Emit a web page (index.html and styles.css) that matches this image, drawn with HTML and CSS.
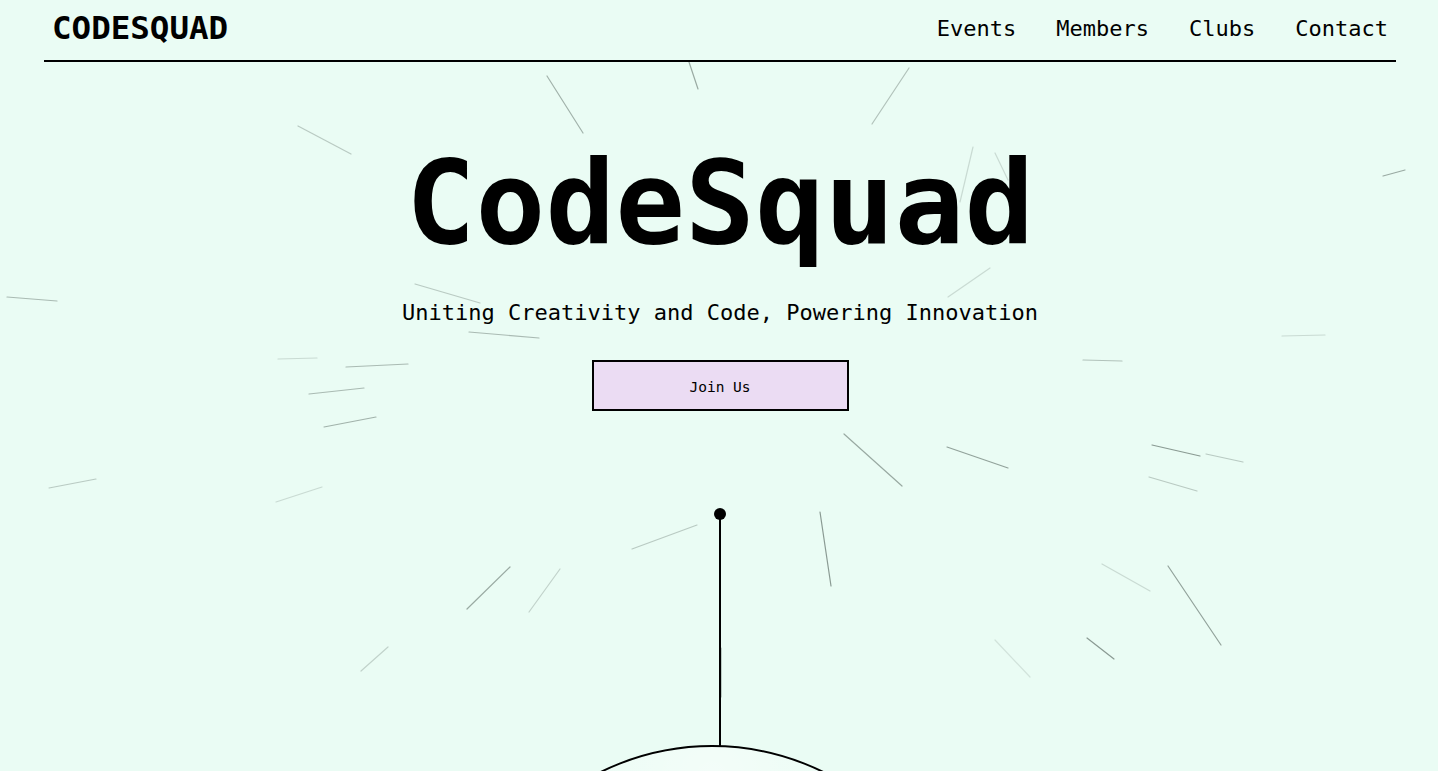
FILE: index.html
```html
<!DOCTYPE html>
<html lang="en">
<head>
<meta charset="utf-8">
<title>CodeSquad</title>
<link rel="stylesheet" href="styles.css">
</head>
<body>
<div class="viewport">
<div class="canvas">
<svg class="warp" viewBox="0 0 1423 771" aria-hidden="true">
  <g stroke="#4b5a53" stroke-width="1.2" stroke-linecap="round">
    <line x1="547" y1="76" x2="583" y2="133" opacity=".45"/>
    <line x1="689" y1="62" x2="698" y2="89" opacity=".5"/>
    <line x1="909" y1="68" x2="872" y2="124" opacity=".35"/>
    <line x1="298" y1="126" x2="351" y2="154" opacity=".3"/>
    <line x1="973" y1="147" x2="960" y2="202" opacity=".2"/>
    <line x1="995" y1="153" x2="1008" y2="180" opacity=".2"/>
    <line x1="1383" y1="176" x2="1405" y2="170" opacity=".5"/>
    <line x1="7" y1="297" x2="57" y2="301" opacity=".4"/>
    <line x1="415" y1="284" x2="480" y2="303" opacity=".3"/>
    <line x1="948" y1="297" x2="990" y2="268" opacity=".2"/>
    <line x1="469" y1="332" x2="539" y2="338" opacity=".4"/>
    <line x1="1282" y1="336" x2="1325" y2="335" opacity=".2"/>
    <line x1="278" y1="359" x2="317" y2="358" opacity=".2"/>
    <line x1="346" y1="367" x2="408" y2="364" opacity=".4"/>
    <line x1="1083" y1="360" x2="1122" y2="361" opacity=".35"/>
    <line x1="309" y1="394" x2="364" y2="388" opacity=".4"/>
    <line x1="324" y1="427" x2="376" y2="417" opacity=".45"/>
    <line x1="844" y1="434" x2="902" y2="486" opacity=".5"/>
    <line x1="947" y1="447" x2="1008" y2="468" opacity=".55"/>
    <line x1="1152" y1="445" x2="1200" y2="456" opacity=".6"/>
    <line x1="1206" y1="454" x2="1243" y2="462" opacity=".3"/>
    <line x1="49" y1="488" x2="96" y2="479" opacity=".3"/>
    <line x1="276" y1="502" x2="322" y2="487" opacity=".2"/>
    <line x1="1149" y1="477" x2="1197" y2="491" opacity=".3"/>
    <line x1="632" y1="549" x2="697" y2="525" opacity=".3"/>
    <line x1="820" y1="512" x2="831" y2="586" opacity=".6"/>
    <line x1="467" y1="609" x2="510" y2="567" opacity=".5"/>
    <line x1="529" y1="612" x2="560" y2="569" opacity=".25"/>
    <line x1="1102" y1="564" x2="1150" y2="591" opacity=".2"/>
    <line x1="1168" y1="566" x2="1221" y2="645" opacity=".55"/>
    <line x1="995" y1="640" x2="1030" y2="677" opacity=".15"/>
    <line x1="1087" y1="638" x2="1114" y2="659" opacity=".6"/>
    <line x1="361" y1="671" x2="388" y2="647" opacity=".25"/>
    <line x1="721" y1="648" x2="721" y2="697" opacity=".5"/>
  </g>
</svg>
<div class="page">
  <header class="topbar">
    <div class="logo">CODESQUAD</div>
    <nav class="nav">
      <a href="#">Events</a>
      <a href="#">Members</a>
      <a href="#">Clubs</a>
      <a href="#">Contact</a>
    </nav>
  </header>
  <main class="hero">
    <h1 class="title">CodeSquad</h1>
    <p class="tagline">Uniting Creativity and Code, Powering Innovation</p>
    <button class="join">Join Us</button>
    <div class="orbit">
      <span class="dot"></span>
      <span class="stem"></span>
      <div class="globe"></div>
    </div>
  </main>
</div>
</div>
</div>
</body>
</html>
```
FILE: styles.css
```css
html, body {
  margin: 0;
  padding: 0;
  height: 100%;
  overflow: hidden;
}
body {
  background: #eafcf4;
  font-family: "DejaVu Sans Mono", monospace;
  color: #000;
}
.viewport {
  height: 100vh;
  overflow-y: scroll;
  overflow-x: hidden;
}
.viewport::-webkit-scrollbar {
  width: 15px;
  background: #f0f0f0;
}
.viewport::-webkit-scrollbar-track {
  background: #f0f0f0;
}
.viewport::-webkit-scrollbar-thumb {
  background: #cdcdcd;
}
.viewport::-webkit-scrollbar-button:single-button:vertical {
  display: block;
  height: 15px;
  background-color: #f0f0f0;
}
.canvas {
  position: relative;
}
.warp {
  position: absolute;
  top: 0;
  left: 0;
  width: 1423px;
  height: 771px;
  z-index: 0;
  pointer-events: none;
}
.page {
  position: relative;
  z-index: 1;
  margin-left: 44px;
  width: 1352px;
  min-height: 2585px;
}
.topbar {
  display: flex;
  justify-content: space-between;
  align-items: center;
  height: 58px;
  padding: 0 8px 2px 8px;
  border-bottom: 2px solid #000;
}
.logo {
  font-weight: bold;
  font-size: 32.5px;
  line-height: 1.164;
}
.nav {
  display: flex;
  gap: 40px;
}
.nav a {
  color: #000;
  text-decoration: none;
  font-size: 22px;
  line-height: 1.164;
}
.hero {
  display: flex;
  flex-direction: column;
  align-items: center;
  text-align: center;
}
.title {
  margin: 83px 0 0;
  font-size: 116px;
  line-height: 116px;
  font-weight: bold;
}
.tagline {
  margin: 39px 0 0;
  font-size: 22px;
  line-height: 26.4px;
}
.join {
  margin-top: 34px;
  width: 257px;
  height: 51px;
  box-sizing: border-box;
  border: 2px solid #000;
  background: #ebdcf3;
  font-family: "DejaVu Sans Mono", monospace;
  font-size: 14.5px;
  color: #000;
  padding: 2px 0 0;
}
.orbit {
  display: flex;
  flex-direction: column;
  align-items: center;
  margin-top: 97px;
}
.dot {
  width: 12px;
  height: 12px;
  border-radius: 50%;
  background: #000;
}
.stem {
  width: 2px;
  height: 227px;
  background: #000;
  margin-top: -1px;
}
.globe {
  width: 504px;
  height: 504px;
  margin-right: 16px;
  margin-top: -1px;
  box-sizing: border-box;
  border: 2px solid #000;
  border-radius: 50%;
  background: radial-gradient(circle at 50% 6%, rgba(255,255,255,0.45), rgba(255,255,255,0) 30%);
}
```
